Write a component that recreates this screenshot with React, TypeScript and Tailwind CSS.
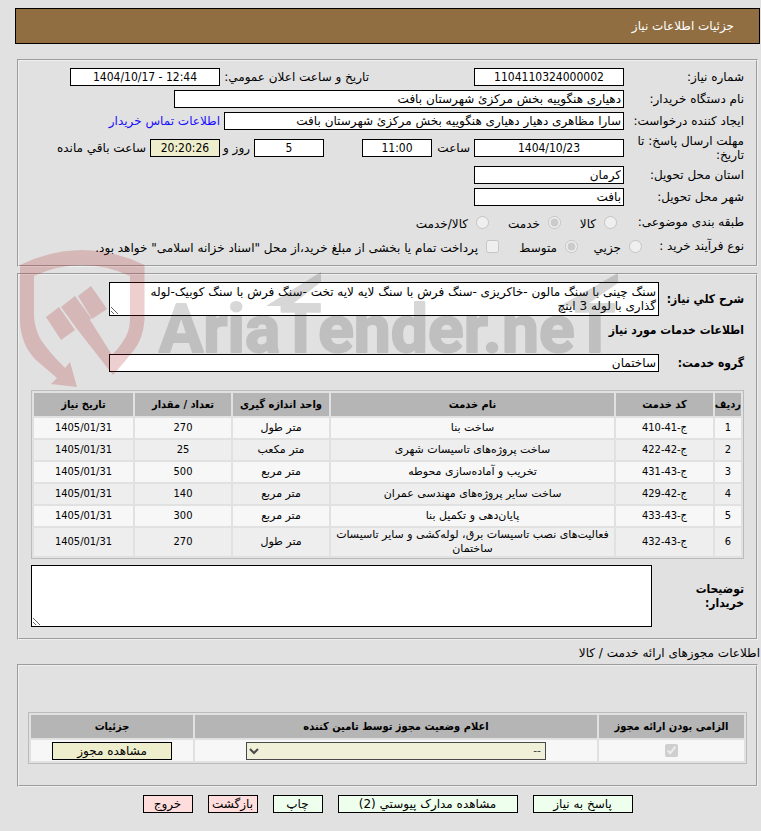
import React from "react";

const field =
  "block h-[18px] shrink-0 border border-black bg-white px-0.5 text-xs leading-4 text-black font-['DejaVu_Sans',sans-serif]";
const numberField =
  "block h-[18px] shrink-0 border border-black px-1 text-center text-xs leading-4 text-black font-['DejaVu_Sans_Condensed','DejaVu_Sans',sans-serif]";
const groove = "mx-0.5 min-w-0 border-2 border-[#f0f0f0] [border-style:groove]";
const label = "w-[120px] shrink-0";
const strong = "font-bold font-['DejaVu_Sans_Condensed','DejaVu_Sans',sans-serif]";
const th = "h-[23px] bg-[#b5b5b5] p-0 text-center font-bold whitespace-nowrap";
const tableClass =
  "w-full table-fixed border-separate border-spacing-0.5 border border-[#bbb] text-[11px] leading-[14px] font-['DejaVu_Sans_Condensed','DejaVu_Sans',sans-serif]";
const greenButton = "h-[18px] border border-black bg-[#eeffee] leading-4";
const pinkButton = "h-[18px] border border-black bg-[#ffdddd] leading-4";

const services = [
  { code: "ج-41-410", name: "ساخت بنا", unit: "متر طول", count: "270", date: "1405/01/31" },
  { code: "ج-42-422", name: "ساخت پروژه‌های تاسیسات شهری", unit: "متر مکعب", count: "25", date: "1405/01/31" },
  { code: "ج-43-431", name: "تخریب و آماده‌سازی محوطه", unit: "متر مربع", count: "500", date: "1405/01/31" },
  { code: "ج-42-429", name: "ساخت سایر پروژه‌های مهندسی عمران", unit: "متر مربع", count: "140", date: "1405/01/31" },
  { code: "ج-43-433", name: "پایان‌دهی و تکمیل بنا", unit: "متر مربع", count: "300", date: "1405/01/31" },
  {
    code: "ج-43-432",
    name: "فعالیت‌های نصب تاسیسات برق، لوله‌کشی و سایر تاسیسات ساختمان",
    unit: "متر طول",
    count: "270",
    date: "1405/01/31",
  },
];

function Choice({ name, text, checked, width }: { name: string; text: string; checked?: boolean; width: string }) {
  return (
    <label className={"flex shrink-0 items-center gap-2 " + width}>
      <input type="radio" name={name} defaultChecked={checked} disabled className="size-[13px]" />
      <span className="pt-1 whitespace-nowrap">{text}</span>
    </label>
  );
}

function Watermark() {
  return (
    <svg
      className="pointer-events-none absolute top-[245px] left-0"
      width="640"
      height="150"
      viewBox="0 245 640 150"
      direction="ltr"
      aria-hidden="true"
    >
      <g fill="#aa1414" opacity="0.2">
        <path d="M20 265Q82 235 144.500 265V320Q143 339 134 350Q127 359 113 375L77 329L61 307L75 296L91 318L90 320L112 355Q118 349 122 343Q130 332 130 320V276Q82 254 34 276V317Q35 330 41 340Q49 352 65 368L70 362L77 387L51 384L57 378L36 360Q21 345 20 322Z" />
        <path d="M46 317L59 307L75 330L61 340Z" />
        <path d="M78 296L91 286L107 309L92 319Z" />
      </g>
      <g fill="#3c3c3c" opacity="0.2">
        <path d="M266 306L321 272V282L290 306Z" />
        <path d="M560 306L618 273V283L585 306Z" />
        <text
          x="159"
          y="352"
          stroke="#3c3c3c"
          strokeWidth="2"
          strokeLinejoin="round"
          className="font-['Roboto',sans-serif] text-[66px] font-bold"
        >
          AriaTender.neT
        </text>
      </g>
    </svg>
  );
}

export default function App() {
  return (
    <div
      dir="rtl"
      className="relative min-h-screen bg-[#e1e1e1] pt-2 pr-px pl-[15px] pb-4 text-xs leading-[14px] text-black font-['DejaVu_Sans',sans-serif]"
    >
      <header className="flex h-9 items-center border border-black bg-[#906e41] px-[25px] text-white">
        <h1>جزئیات اطلاعات نیاز</h1>
      </header>

      <fieldset className={groove + " mt-[15px] px-3 pt-[5px] pb-[9px]"}>
        <div className="flex h-[22px] items-center">
          <label htmlFor="needNo" className={label}>شماره نیاز:</label>
          <input id="needNo" readOnly defaultValue="1104110324000002" className={numberField + " w-[150px] bg-white"} />
          <label htmlFor="announced" className="mr-[105px] w-[149px] shrink-0 whitespace-nowrap">
            تاریخ و ساعت اعلان عمومي:
          </label>
          <input id="announced" dir="ltr" readOnly defaultValue="1404/10/17 - 12:44" className={numberField + " w-[150px] bg-white"} />
        </div>
        <div className="flex h-[22px] items-center">
          <label htmlFor="buyer" className={label}>نام دستگاه خریدار:</label>
          <input id="buyer" readOnly defaultValue="دهیاری هنگوییه بخش مرکزئ شهرستان بافت" className={field + " w-[450px]"} />
        </div>
        <div className="flex h-[22px] items-center">
          <label htmlFor="creator" className={label}>ایجاد کننده درخواست:</label>
          <input
            id="creator"
            readOnly
            defaultValue="سارا مظاهری دهیار دهیاری هنگوییه بخش مرکزئ شهرستان بافت"
            className={field + " w-[400px]"}
          />
          <a href="#contact" className="mr-1 whitespace-nowrap text-[#1a0dff]">اطلاعات تماس خریدار</a>
        </div>
        <div className="flex h-8 items-center">
          <label htmlFor="deadline" className={label}>مهلت ارسال پاسخ: تا تاریخ:</label>
          <input id="deadline" readOnly defaultValue="1404/10/23" className={numberField + " w-[150px] bg-white"} />
          <label htmlFor="hour" className="mr-1 w-[38px] shrink-0">ساعت</label>
          <input id="hour" readOnly defaultValue="11:00" className={numberField + " w-[70px] bg-white"} />
          <input id="days" readOnly defaultValue="5" className={numberField + " mr-[38px] w-[70px] bg-white"} />
          <label htmlFor="days" className="mr-1 w-[30px] shrink-0 whitespace-nowrap">روز و</label>
          <input id="left" readOnly defaultValue="20:20:26" className={numberField + " w-[70px] bg-[#eeeecc]"} />
          <label htmlFor="left" className="mr-1 whitespace-nowrap">ساعت باقي مانده</label>
        </div>
        <div className="flex h-[22px] items-center">
          <label htmlFor="province" className={label}>استان محل تحویل:</label>
          <input id="province" readOnly defaultValue="کرمان" className={field + " w-[150px]"} />
        </div>
        <div className="flex h-[22px] items-center">
          <label htmlFor="city" className={label}>شهر محل تحویل:</label>
          <input id="city" readOnly defaultValue="بافت" className={field + " w-[150px]"} />
        </div>
        <div className="flex h-7 items-center" role="radiogroup" aria-labelledby="subject">
          <span id="subject" className={label}>طبقه بندی موضوعی:</span>
          <div className="mr-[7px] flex">
            <Choice name="subject" text="کالا" width="w-[56px]" />
            <Choice name="subject" text="خدمت" checked width="w-[72px]" />
            <Choice name="subject" text="کالا/خدمت" width="w-[80px]" />
          </div>
        </div>
        <div className="flex h-5 items-center" role="radiogroup" aria-labelledby="process">
          <span id="process" className="w-[102px] shrink-0">نوع فرآیند خرید :</span>
          <Choice name="process" text="جزیي" width="w-[64px]" />
          <Choice name="process" text="متوسط" checked width="w-[79px]" />
          <label className="flex items-center gap-2">
            <input type="checkbox" disabled className="size-[13px]" />
            <span className="pt-1 whitespace-nowrap">
              پرداخت تمام یا بخشی از مبلغ خرید،از محل "اسناد خزانه اسلامی" خواهد بود.
            </span>
          </label>
        </div>
      </fieldset>

      <fieldset className={groove + " mt-1.5 px-3 pt-[7px] pb-[11px]"}>
        <div className="flex items-center">
          <label htmlFor="summary" className={strong + " w-[85px] shrink-0 whitespace-nowrap"}>شرح کلي نیاز:</label>
          <textarea
            id="summary"
            readOnly
            className="block h-[34px] w-[550px] shrink-0 overflow-hidden border border-black bg-white py-0.5 pr-0.5 pl-4 leading-[14px]"
            defaultValue="سنگ چینی با سنگ مالون -خاکریزی -سنگ فرش با سنگ لایه لایه تخت -سنگ فرش با سنگ کوبیک-لوله گذاری با لوله 3 اینچ"
          />
        </div>
        <h2 className={strong + " mt-[7px]"}>اطلاعات خدمات مورد نیاز</h2>
        <div className="mt-[17px] flex items-center">
          <label htmlFor="group" className={strong + " w-[85px] shrink-0"}>گروه خدمت:</label>
          <input id="group" readOnly defaultValue="ساختمان" className={field + " w-[550px]"} />
        </div>

        <table className={tableClass + " mt-[18px]"}>
          <colgroup>
            <col className="w-[26px]" />
            <col className="w-[97px]" />
            <col />
            <col className="w-[96px]" />
            <col className="w-[96px]" />
            <col className="w-[99px]" />
          </colgroup>
          <thead>
            <tr>
              <th className={th}>ردیف</th>
              <th className={th}>کد خدمت</th>
              <th className={th}>نام خدمت</th>
              <th className={th}>واحد اندازه گیری</th>
              <th className={th}>تعداد / مقدار</th>
              <th className={th}>تاریخ نیاز</th>
            </tr>
          </thead>
          <tbody>
            {services.map((s, i) => (
              <tr key={s.code} className="h-5 bg-[#f7f7f7] text-center even:bg-[#eeeeee]">
                <td className="p-0">{i + 1}</td>
                <td className="p-0">{s.code}</td>
                <td className="p-0 font-['DejaVu_Sans',sans-serif]">{s.name}</td>
                <td className="p-0 font-['DejaVu_Sans',sans-serif]">{s.unit}</td>
                <td className="p-0">{s.count}</td>
                <td className="p-0">{s.date}</td>
              </tr>
            ))}
          </tbody>
        </table>

        <div className="mt-1.5 flex items-center">
          <label htmlFor="notes" className={strong + " w-[92px] shrink-0 pl-8"}>توضیحات خریدار:</label>
          <textarea id="notes" readOnly className="block h-[62px] min-w-0 flex-1 border border-black bg-white p-0.5" />
        </div>
      </fieldset>

      <h2 className="mt-1.5">اطلاعات مجوزهای ارائه خدمت / کالا</h2>

      <fieldset className={groove + " mt-1 px-[9px] pt-[46px] pb-[21px]"}>
        <table className={tableClass}>
          <colgroup>
            <col className="w-[145px]" />
            <col />
            <col className="w-[162px]" />
          </colgroup>
          <thead>
            <tr>
              <th className={th}>الزامی بودن ارائه مجوز</th>
              <th className={th}>اعلام وضعیت مجوز توسط تامین کننده</th>
              <th className={th}>جزئیات</th>
            </tr>
          </thead>
          <tbody>
            <tr className="h-[21px] bg-[#f7f7f7]">
              <td className="p-0">
                <input type="checkbox" aria-label="الزامی بودن ارائه مجوز" defaultChecked disabled className="mx-auto block size-[13px]" />
              </td>
              <td className="p-0">
                <select
                  aria-label="اعلام وضعیت مجوز توسط تامین کننده"
                  disabled
                  className="mx-auto block h-[18px] w-[300px] border border-black bg-[#eeeecc] text-xs text-black opacity-70"
                >
                  <option>--</option>
                </select>
              </td>
              <td className="p-0">
                <button
                  type="button"
                  className="mx-auto block h-[18px] w-[120px] border border-black bg-[#eeeecc] text-xs leading-4 font-['DejaVu_Sans',sans-serif]"
                >
                  مشاهده مجوز
                </button>
              </td>
            </tr>
          </tbody>
        </table>
      </fieldset>

      <div className="mt-2 flex justify-center gap-[15px]">
        <button type="button" className={greenButton + " w-[100px]"}>پاسخ به نیاز</button>
        <button type="button" className={greenButton + " w-[180px]"}>مشاهده مدارک پیوستي (2)</button>
        <button type="button" className={greenButton + " w-[50px]"}>چاپ</button>
        <button type="button" className={pinkButton + " w-[50px]"}>بازگشت</button>
        <button type="button" className={pinkButton + " w-[50px]"}>خروج</button>
      </div>

      <Watermark />
    </div>
  );
}
